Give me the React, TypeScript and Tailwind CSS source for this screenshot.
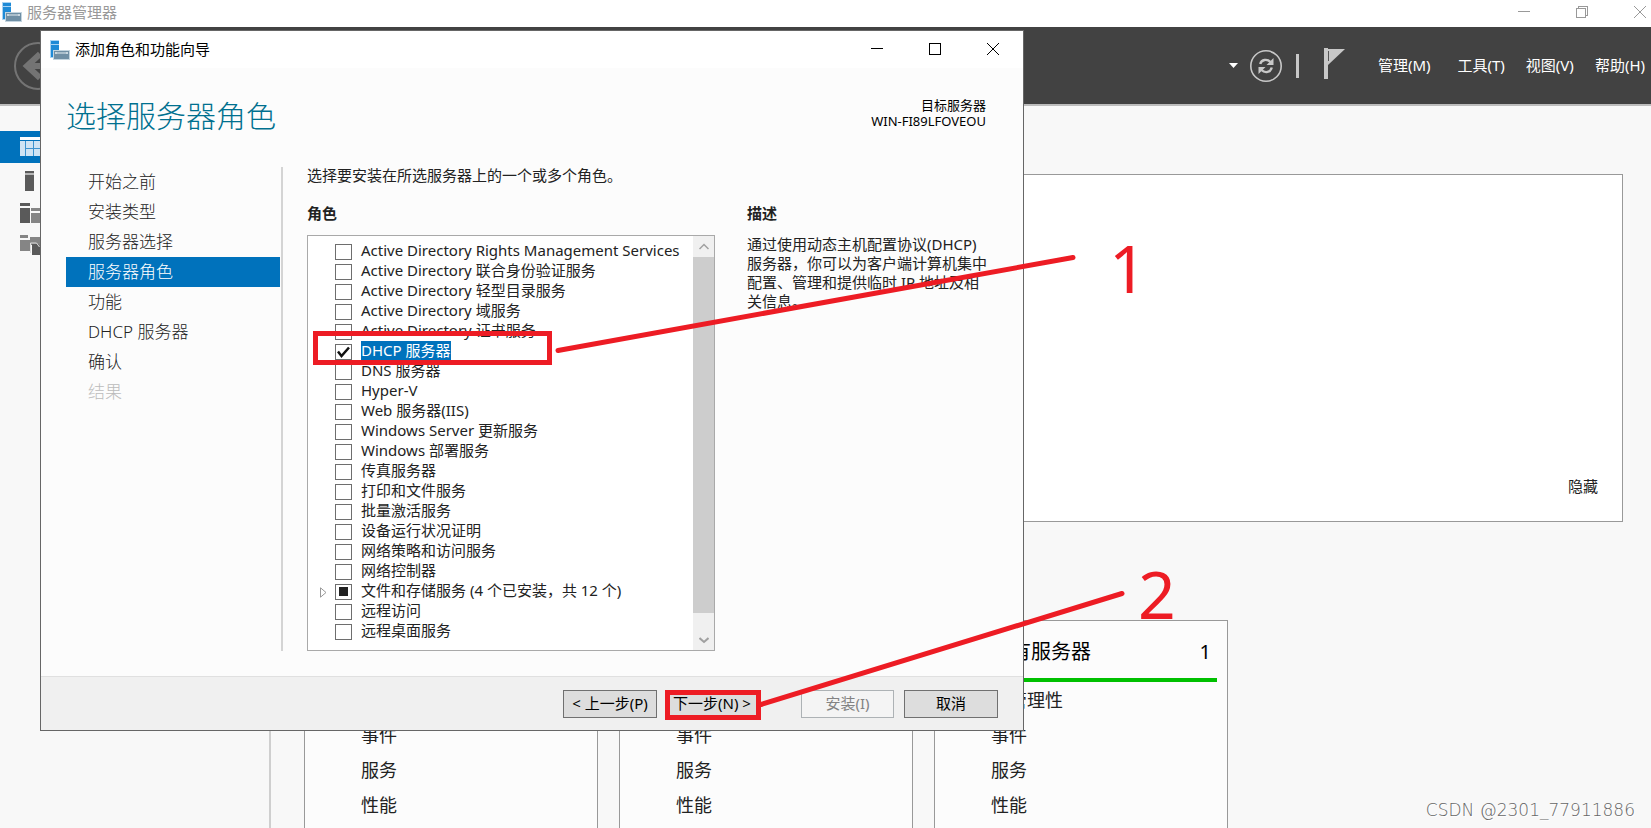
import { useState } from "react";
import type { ReactNode } from "react";

type Role = {
  name: string;
  checked?: boolean;
  partial?: boolean;
};

const roles: Role[] = [
  { name: "Active Directory Rights Management Services" },
  { name: "Active Directory 联合身份验证服务" },
  { name: "Active Directory 轻型目录服务" },
  { name: "Active Directory 域服务" },
  { name: "Active Directory 证书服务" },
  { name: "DHCP 服务器", checked: true },
  { name: "DNS 服务器" },
  { name: "Hyper-V" },
  { name: "Web 服务器(IIS)" },
  { name: "Windows Server 更新服务" },
  { name: "Windows 部署服务" },
  { name: "传真服务器" },
  { name: "打印和文件服务" },
  { name: "批量激活服务" },
  { name: "设备运行状况证明" },
  { name: "网络策略和访问服务" },
  { name: "网络控制器" },
  { name: "文件和存储服务 (4 个已安装，共 12 个)", partial: true },
  { name: "远程访问" },
  { name: "远程桌面服务" },
];

const steps = ["开始之前", "安装类型", "服务器选择", "服务器角色", "功能", "DHCP 服务器", "确认", "结果"];

const tiles = ["文件和存储服务", "本地服务器", "所有服务器"];

function ServerIcon() {
  return (
    <svg width="20" height="20" viewBox="0 0 20 20" aria-hidden="true">
      <rect x="0" y="0" width="9" height="18" fill="#a9d3f3" />
      <rect x="1" y="1" width="8" height="3" fill="#1e8ad6" />
      <rect x="1" y="5" width="8" height="12" fill="#1e8ad6" />
      <path d="M3 20V10h17v10z" fill="#c3d4df" />
      <rect x="4" y="11" width="15" height="8" fill="#6f8fa5" />
      <path d="M5 13h13M6 12v2M17 12v2" stroke="#e6eef3" strokeWidth="1" />
    </svg>
  );
}

function CaptionButtons({ maximized }: { maximized?: boolean }) {
  return (
    <div className="flex self-stretch pb-0.5">
      <button type="button" aria-label="最小化" className="flex w-[58px] items-center justify-center">
        <svg width="12" height="12" viewBox="0 0 12 12" shapeRendering="crispEdges">
          <path d="M0 5.5h12" stroke="currentColor" />
        </svg>
      </button>
      <button type="button" aria-label="最大化" className="flex w-[58px] items-center justify-center">
        <svg width="12" height="12" viewBox="0 0 12 12" fill="none" stroke="currentColor" shapeRendering="crispEdges">
          {maximized ? <path d="M.5 2.5h9v9h-9zM2.5 2.5v-2h9v9h-2" /> : <path d="M.5 .5h11v11H.5z" />}
        </svg>
      </button>
      <button type="button" aria-label="关闭" className="flex w-[58px] items-center justify-center">
        <svg width="12" height="12" viewBox="0 0 12 12" stroke="currentColor">
          <path d="M0 0l12 12M12 0L0 12" />
        </svg>
      </button>
    </div>
  );
}

function Toolbar() {
  return (
    <header className="flex h-[79px] shrink-0 items-center border-b-2 border-[#bdbdbd] bg-[#424242] pr-1.5 pl-3.5 text-white">
      <button type="button" aria-label="后退">
        <svg width="48" height="48" viewBox="0 0 48 48" fill="none" stroke="#747474">
          <circle cx="24" cy="24" r="23" strokeWidth="2" />
          <path d="M26 12L13 24l13 12M13 24h26" strokeWidth="6" />
        </svg>
      </button>
      <div className="ml-auto flex items-center">
        <button type="button" aria-label="历史记录" className="mr-3">
          <svg width="9" height="5" viewBox="0 0 9 5" fill="#fff">
            <path d="M0 0h9L4.500 5z" />
          </svg>
        </button>
        <button type="button" aria-label="刷新" className="mr-3.5">
          <svg width="32" height="32" viewBox="0 0 32 32" fill="none" stroke="#c8c8c8">
            <circle cx="16" cy="16" r="15.200" strokeWidth="1.600" />
            <path d="M10.200 14C11.500 9.500 17 8.500 20.500 12" strokeWidth="2.400" />
            <path d="M21.800 17.500C20.500 22.500 15 23.500 11.500 20" strokeWidth="2.400" />
            <path d="M23.500 8v7H16.500zM8.500 24v-7h7z" fill="#c8c8c8" stroke="none" />
          </svg>
        </button>
        <span className="mr-6 h-6 w-[3px] bg-[#c8c8c8]" />
        <button type="button" aria-label="通知" className="mr-[31px] pb-1">
          <svg width="24" height="32" viewBox="0 0 24 32" fill="#c8c8c8">
            <path d="M1 0h4v31H1z" />
            <path d="M5 1h17L5 17z" />
            <path d="M5.500 3v10" stroke="#555" />
          </svg>
        </button>
        <nav className="flex gap-[21px] pb-0.5 text-[15px] leading-5">
          <button type="button" className="mr-1.5">管理(M)</button>
          <button type="button">工具(T)</button>
          <button type="button">视图(V)</button>
          <button type="button">帮助(H)</button>
        </nav>
      </div>
    </header>
  );
}

function SideItem({ label, active, children }: { label: string; active?: boolean; children: ReactNode }) {
  return (
    <a href="#" aria-label={label} className={`flex h-8 items-center pl-5 ${active ? "mb-0.5 bg-[#0072bc]" : ""}`}>
      {children}
    </a>
  );
}

function Sidebar() {
  return (
    <aside className="w-[271px] shrink-0 border-r-2 border-[#cfcfcf] pt-[25px]">
      <SideItem label="仪表板" active>
        <svg width="26" height="20" viewBox="0 0 26 20">
          <path d="M0 0h26v3H0z" fill="#fff" />
          <path d="M0 4h26v15H0z" fill="#cfe4f4" />
          <path d="M5.500 4v15M13.500 4v15M20.500 4v15M5 11.500h21" stroke="#3d93cf" />
        </svg>
      </SideItem>
      <SideItem label="本地服务器">
        <svg width="26" height="20" viewBox="0 0 26 20" fill="#5a5a5a">
          <path d="M5 0h9v2H5zM5 4h9v16H5z" />
          <path d="M5 2h9v2H5z" fill="#b5b5b5" />
        </svg>
      </SideItem>
      <SideItem label="所有服务器">
        <svg width="26" height="20" viewBox="0 0 26 20" fill="#5a5a5a">
          <path d="M0 0h10v3H0zM0 5h10v15H0z" />
          <path d="M11 5h10v3H11zM11 10h10v10H11z" fill="#858585" />
        </svg>
      </SideItem>
      <SideItem label="文件和存储服务">
        <svg width="26" height="20" viewBox="0 0 26 20" fill="#858585">
          <path d="M0 0h8v3H0zM0 5h10v11H0z" />
          <path d="M10 2h12v8H10z" />
          <path d="M12 9h6l4 3v8H12z" fill="#5a5a5a" />
          <path d="M10.500 18V8h6l3 4" fill="none" stroke="#ddd" />
        </svg>
      </SideItem>
    </aside>
  );
}

function Dashboard() {
  return (
    <main className="flex min-w-0 flex-1 flex-col pt-[68px] pl-[33px]">
      <section className="mr-7 flex h-[348px] shrink-0 items-end justify-end border border-[#999] bg-white pr-6 pb-[25px]">
        <button type="button" className="text-[15px] leading-5 text-[#222]">隐藏</button>
      </section>
      <div className="mt-[98px] flex gap-[21px]">
        {tiles.map((title) => (
          <section key={title} className="w-[294px] shrink-0 border border-[#999] bg-[#fcfcfc] px-2.5 pt-4 pb-10">
            <div className="flex h-[41px] items-start justify-between pr-1.5 pl-[46px] text-xl leading-[30px] text-black">
              <h2>{title}</h2>
              <span>1</span>
            </div>
            <div className="h-1 bg-[#00c000]" />
            <ul className="pt-px pl-[46px] text-lg leading-[35px] text-[#222]">
              <li>可管理性</li>
              <li>事件</li>
              <li>服务</li>
              <li>性能</li>
            </ul>
          </section>
        ))}
      </div>
    </main>
  );
}

function RoleRow({ role }: { role: Role }) {
  const [checked, setChecked] = useState(!!role.checked);

  return (
    <li className="flex h-5 items-start">
      <span className="w-[27px] self-center pt-0.5 pl-3">
        {role.partial && (
          <svg width="7" height="11" viewBox="0 0 7 11" fill="#fff" stroke="#999">
            <path d="M.5 .8v9.400L6 5.500z" />
          </svg>
        )}
      </span>
      <label className="flex items-start gap-[9px]">
        <span className="relative mt-[3px] flex h-4 w-[17px]">
          <input
            type="checkbox"
            checked={checked}
            onChange={(e) => setChecked(e.target.checked)}
            className="h-4 w-[17px] appearance-none border border-[#6e6e6e] bg-white"
          />
          {checked && (
            <svg className="pointer-events-none absolute inset-0" width="17" height="16" viewBox="0 0 17 16">
              <path d="M3 7.500l3.500 4.500L14 3.500" fill="none" stroke="#111" strokeWidth="2.500" />
            </svg>
          )}
          {role.partial && !checked && (
            <span className="pointer-events-none absolute top-[3px] left-1 size-[9px] bg-[#212121]" />
          )}
        </span>
        <span
          className={`pb-px text-[15px] leading-[18px] whitespace-nowrap ${checked ? "bg-[#0072bc] text-white" : "text-[#222]"}`}
        >
          {role.name}
        </span>
      </label>
    </li>
  );
}

function RoleList() {
  return (
    <div className="mt-3 flex h-[416px] border border-[#a9a9a9] bg-white">
      <ul className="min-w-0 flex-1 pt-[5px]">
        {roles.map((role) => (
          <RoleRow key={role.name} role={role} />
        ))}
      </ul>
      <div className="flex w-[21px] flex-col bg-[#f0f0f0]">
        <button type="button" aria-label="向上滚动" className="flex h-[21px] items-center justify-center">
          <svg width="10" height="7" viewBox="0 0 10 7" fill="none" stroke="#a0a0a0" strokeWidth="1.500">
            <path d="M.5 6L5 1.500 9.500 6" />
          </svg>
        </button>
        <div className="flex-1 bg-[#cdcdcd]" />
        <div className="h-[18px]" />
        <button type="button" aria-label="向下滚动" className="flex h-[19px] items-center justify-center">
          <svg width="10" height="7" viewBox="0 0 10 7" fill="none" stroke="#a0a0a0" strokeWidth="2">
            <path d="M.5 1L5 5 9.500 1" />
          </svg>
        </button>
      </div>
    </div>
  );
}

function Wizard() {
  return (
    <div
      role="dialog"
      aria-label="添加角色和功能向导"
      className="absolute top-[30px] left-10 w-[984px] border border-[#666] bg-[#fcfcfc]"
    >
      <div className="flex h-[37px] items-center bg-white pr-px pl-[9px] text-black">
        <ServerIcon />
        <span className="ml-[5px] flex-1 pb-0.5 text-[15px] leading-5">添加角色和功能向导</span>
        <CaptionButtons />
      </div>

      <div className="flex h-[99px] items-start justify-between pt-7 pr-[37px] pl-[25px]">
        <h1 className="text-[30px] leading-10 font-light text-[#00708f]">选择服务器角色</h1>
        <div className="pt-px text-right text-[13px] leading-4 text-black">
          <div>目标服务器</div>
          <div>WIN-FI89LFOVEOU</div>
        </div>
      </div>

      <div className="flex pr-9 pb-[25px] pl-[25px]">
        <ol className="w-[217px] shrink-0 border-r-2 border-[#d4d4d4] pr-px text-[17px] leading-[30px] font-light">
          {steps.map((step) => (
            <li
              key={step}
              className={`pl-[22px] ${
                step === "服务器角色" ? "bg-[#0072bc] text-white" : step === "结果" ? "text-[#bbb]" : "text-[#222]"
              }`}
            >
              {step}
            </li>
          ))}
        </ol>

        <div className="min-w-0 flex-1 pl-6 text-[15px] text-[#222]">
          <p className="leading-4">选择要安装在所选服务器上的一个或多个角色。</p>
          <div className="mt-5 flex gap-8">
            <div className="w-[408px] shrink-0">
              <h2 className="leading-5 font-bold">角色</h2>
              <RoleList />
            </div>
            <div className="min-w-0 flex-1">
              <h2 className="leading-5 font-bold">描述</h2>
              <p className="mt-3 leading-[19px]">
                通过使用动态主机配置协议(DHCP)服务器，你可以为客户端计算机集中配置、管理和提供临时 IP 地址及相关信息。
              </p>
            </div>
          </div>
        </div>
      </div>

      <footer className="flex h-[54px] items-start justify-end border-t border-[#e0e0e0] bg-[#f0f0f0] pt-[13px] pr-[25px] text-[15px] leading-5 text-black">
        <button type="button" className="h-7 w-[94px] border border-[#707070] bg-[#ddd] pb-0.5">&lt; 上一步(P)</button>
        <button type="button" className="ml-2 h-7 w-[94px] border border-[#707070] bg-[#ddd] pb-0.5">下一步(N) &gt;</button>
        <button
          type="button"
          disabled
          className="ml-[42px] h-7 w-[93px] border border-[#adb2b5] bg-[#f4f4f4] pb-0.5 text-[#838383]"
        >
          安装(I)
        </button>
        <button type="button" className="ml-2.5 h-7 w-[94px] border border-[#707070] bg-[#ddd] pb-0.5">取消</button>
      </footer>
    </div>
  );
}

// Red call-outs drawn over the wizard
function Annotations() {
  return (
    <svg
      className="pointer-events-none absolute top-0 left-0"
      width="1200"
      height="760"
      viewBox="0 0 1200 760"
      fill="none"
      stroke="#ed1c24"
      strokeWidth="5"
    >
      <rect x="315.500" y="333.500" width="234" height="29" />
      <rect x="667.500" y="692.500" width="91" height="25" />
      <path d="M558 350.500L1073 257.500M761 704.500L1122 593.500" strokeLinecap="round" />
      <g fill="#ed1c24" stroke="none" className="text-[66px]">
        <text x="1109" y="293">1</text>
        <text x="1138" y="619">2</text>
      </g>
    </svg>
  );
}

export default function App() {
  return (
    <div className="relative flex h-screen flex-col overflow-hidden bg-[#f8f8f8] font-['Noto_Sans','Noto_Sans_CJK_SC',sans-serif]">
      <div className="flex h-[27px] shrink-0 bg-white pl-0.5 text-[#999]">
        <div className="mt-0.5">
          <ServerIcon />
        </div>
        <span className="ml-[5px] flex-1 text-[15px] leading-6">服务器管理器</span>
        <div className="-mr-[18px] flex h-[26px]">
          <CaptionButtons maximized />
        </div>
      </div>
      <Toolbar />
      <div className="flex min-h-0 flex-1">
        <Sidebar />
        <Dashboard />
      </div>
      <Wizard />
      <Annotations />
      <div className="absolute right-4 bottom-1 font-['DejaVu_Sans'] text-[17px] leading-7 font-extralight text-[#666] [text-shadow:1px_1px_0_#fff]">
        CSDN @2301_77911886
      </div>
    </div>
  );
}
